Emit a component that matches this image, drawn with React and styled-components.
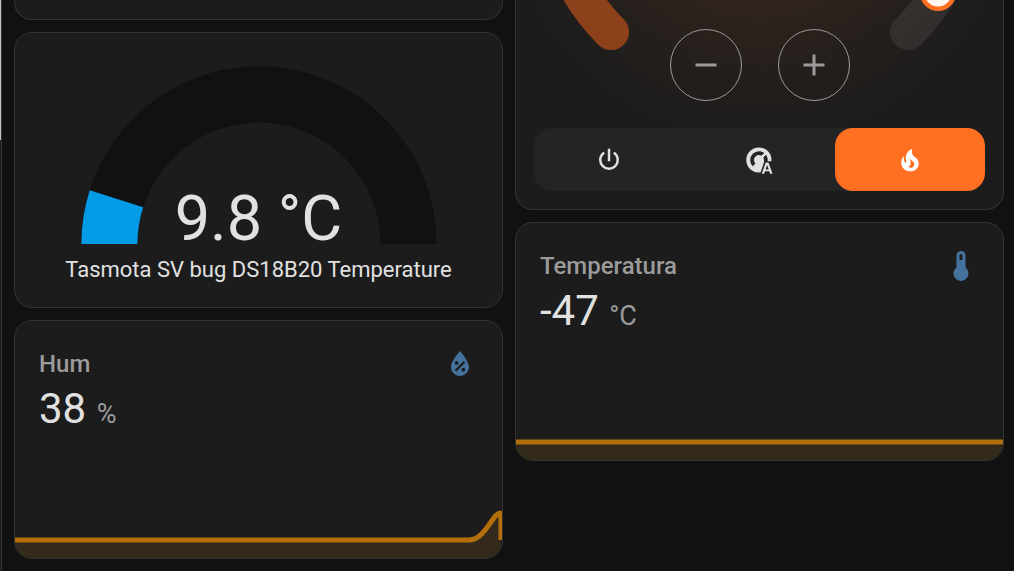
import React from "react";
import styled, { createGlobalStyle } from "styled-components";

const GlobalStyle = createGlobalStyle`
  * {
    box-sizing: border-box;
  }

  body {
    margin: 0;
    background-color: #111111;
    color: #e1e1e1;
    font-family: Roboto, "Liberation Sans", sans-serif;
    overflow: hidden;
  }
`;

const Page = styled.div`
  display: flex;
  min-height: 100vh;
`;

const Sidebar = styled.div`
  width: 2px;
  flex-shrink: 0;
  background-color: #1c1c1c;
  border-right: 1px solid #333333;
`;

const ScrollThumb = styled.div`
  height: 140px;
  background-color: #c1c1c1;
`;

const Board = styled.main`
  flex: 1;
  display: grid;
  grid-template-columns: 1fr 1fr;
  align-items: start;
  gap: 12px;
  padding: 0 10px 12px 12px;
`;

const Column = styled.div`
  display: flex;
  flex-direction: column;
  gap: 12px;
`;

const Card = styled.section`
  background-color: #1c1c1c;
  border: 1px solid #333333;
  border-radius: 18px;
  overflow: hidden;
`;

const CardEnd = styled(Card)`
  height: 20px;
  border-top: none;
  border-radius: 0 0 18px 18px;
`;

const GaugeCard = styled(Card)`
  display: flex;
  flex-direction: column;
  align-items: center;
  padding: 24px;
`;

const GaugeDial = styled.div`
  display: grid;
  justify-items: center;
  align-items: end;
  width: 100%;
  max-width: 374px;

  svg,
  p {
    grid-area: 1 / 1;
  }

  svg {
    display: block;
    width: 100%;
  }

  p {
    margin: 0;
    font-size: 63px;
    line-height: 50px;
  }
`;

const GaugeName = styled.h2`
  margin: 12px 0 0;
  font-size: 22px;
  font-weight: 400;
  line-height: 27px;
  text-align: center;
`;

const SensorCard = styled(Card)`
  display: flex;
  flex-direction: column;
  padding-top: 12px;
`;

const SensorHeader = styled.div`
  display: flex;
  justify-content: space-between;
  align-items: center;
  padding: 0 24px;
  height: 62px;

  h2 {
    margin: 0;
    color: #9b9b9b;
    font-size: 24px;
    font-weight: 500;
    line-height: 60px;
  }

  svg {
    color: #44739e;
  }
`;

const SensorValue = styled.p`
  margin: -6px 0 74px;
  padding: 0 24px;
  font-size: 42px;
  line-height: 40px;

  span {
    color: #9b9b9b;
    font-size: 27px;
  }
`;

const Graph = styled.svg`
  display: block;
  width: 100%;
  height: 50px;
`;

const ThermostatCard = styled(Card)`
  border-top: none;
  border-radius: 0 0 18px 18px;
  padding: 0 18px 18px;
  background-image: radial-gradient(
    circle at 50% -118px,
    rgba(255, 111, 34, 0.18) 0,
    rgba(255, 111, 34, 0.09) 118px,
    rgba(255, 111, 34, 0.04) 190px,
    rgba(255, 111, 34, 0) 260px
  );
`;

const Dial = styled.div`
  display: grid;
  justify-items: center;
  padding-bottom: 27px;

  > * {
    grid-area: 1 / 1;
  }
`;

const Steps = styled.div`
  display: flex;
  gap: 36px;
  padding-top: 29px;
`;

const StepButton = styled.button`
  display: flex;
  align-items: center;
  justify-content: center;
  width: 72px;
  height: 72px;
  padding: 0;
  background: none;
  border: 1px solid #9b9b9b;
  border-radius: 50%;
  color: #9b9b9b;
  cursor: pointer;
`;

const Modes = styled.div`
  display: flex;
  height: 63px;
  background-color: #242424;
  border-radius: 18px;
`;

const ModeButton = styled.button`
  flex: 1;
  display: flex;
  align-items: center;
  justify-content: center;
  padding: 0;
  border: none;
  border-radius: 18px;
  background-color: ${props => (props.$active ? "#ff6f22" : "transparent")};
  color: ${props => (props.$active ? "#ffffff" : "#e1e1e1")};
  cursor: pointer;
`;

const icons = {
  minus: "M19,13H5V11H19V13Z",
  plus: "M19,13H13V19H11V13H5V11H11V5H13V11H19V13Z",
  power:
    "M16.56,5.44L15.11,6.89C16.84,7.94 18,9.83 18,12A6,6 0 0,1 12,18A6,6 0 0,1 6,12C6,9.83 7.16,7.94 8.88,6.88L7.44,5.44C5.36,6.88 4,9.28 4,12A8,8 0 0,0 12,20A8,8 0 0,0 20,12C20,9.28 18.64,6.88 16.56,5.44M13,3H11V13H13",
  thermostatAuto:
    "M12 2A10 10 0 0 1 21.95 13L21.2 13H18.93C19.1 11 18.6 9.2 17.6 7.81L15.43 10C15.79 10.57 16 11.26 16 12V14L13.2 21.9A10 10 0 1 1 12 2ZM12 5A7 7 0 0 0 5 12C5 13.93 5.78 15.68 7.05 16.95L9.17 14.83C8.45 14.1 8 13.1 8 12A4 4 0 0 1 12 8C12.74 8 13.43 8.21 14 8.56L16.19 6.4C15 5.5 13.57 5 12 5ZM17.4 14H19.6L22.8 23H20.9L20.2 21H16.8L16.1 23H14.2L17.4 14ZM17.25 19.6H19.75L18.5 15.9Z",
  fire:
    "M17.66 11.2C17.43 10.9 17.15 10.64 16.89 10.38C16.22 9.78 15.46 9.35 14.82 8.72C13.33 7.26 13 4.85 13.95 3C13 3.23 12.17 3.75 11.46 4.32C8.87 6.4 7.85 10.07 9.07 13.22C9.11 13.32 9.15 13.42 9.15 13.55C9.15 13.77 9 13.97 8.8 14.05C8.57 14.15 8.33 14.09 8.14 13.93C8.08 13.88 8.04 13.83 8 13.76C6.87 12.33 6.69 10.28 7.45 8.64C5.78 10 4.87 12.3 5 14.47C5.06 14.97 5.12 15.47 5.29 15.97C5.43 16.57 5.7 17.17 6 17.7C7.08 19.43 8.95 20.67 10.96 20.92C13.1 21.19 15.39 20.8 17.03 19.32C18.86 17.66 19.5 15 18.56 12.72L18.43 12.46C18.22 12 17.66 11.2 17.66 11.2M14.5 17.5C14.22 17.74 13.76 18 13.4 18.1C12.28 18.5 11.16 17.94 10.5 17.28C11.69 17 12.4 16.12 12.61 15.23C12.78 14.43 12.46 13.77 12.33 13C12.21 12.26 12.23 11.63 12.5 10.94C12.69 11.32 12.89 11.7 13.13 12C13.9 13 15.11 13.44 15.37 14.8C15.41 14.94 15.43 15.08 15.43 15.23C15.46 16.05 15.1 16.95 14.5 17.5Z",
  waterPercent:
    "M12,3.25C12,3.25 6,10 6,14C6,17.32 8.69,20 12,20A6,6 0 0,0 18,14C18,10 12,3.25 12,3.25M14.47,9.97L15.53,11.03L9.53,17.03L8.47,15.97M9.75,10A1.25,1.25 0 0,1 11,11.25A1.25,1.25 0 0,1 9.75,12.5A1.25,1.25 0 0,1 8.5,11.25A1.25,1.25 0 0,1 9.75,10M14.25,14.5A1.25,1.25 0 0,1 15.5,15.75A1.25,1.25 0 0,1 14.25,17A1.25,1.25 0 0,1 13,15.75A1.25,1.25 0 0,1 14.25,14.5Z",
  thermometer:
    "M15 13V5A3 3 0 0 0 9 5V13A5 5 0 1 0 15 13M12 4A1 1 0 0 1 13 5V8H11V5A1 1 0 0 1 12 4Z"
};

const Icon = ({ name, size }) => (
  <svg width={size} height={size} viewBox="0 0 24 24" aria-hidden="true">
    <path d={icons[name]} fill="currentColor" fillRule="evenodd" />
  </svg>
);

const Gauge = ({ value, unit, name }) => {
  const angle = (value / 100) * Math.PI;
  const x = -40 * Math.cos(angle);
  const y = -40 * Math.sin(angle);

  return (
    <GaugeCard>
      <GaugeDial>
        <svg viewBox="-50 -50 100 50" fill="none" strokeWidth="15">
          <path d="M-40 0A40 40 0 0 1 40 0" stroke="#111111" />
          <path d={`M-40 0A40 40 0 0 1 ${x} ${y}`} stroke="#039be5" />
        </svg>
        <p>
          {value} {unit}
        </p>
      </GaugeDial>
      <GaugeName>{name}</GaugeName>
    </GaugeCard>
  );
};

const Sensor = ({ name, value, unit, icon, line }) => (
  <SensorCard>
    <SensorHeader>
      <h2>{name}</h2>
      <Icon name={icon} size={36} />
    </SensorHeader>
    <SensorValue>
      {value} <span>{unit}</span>
    </SensorValue>
    <Graph viewBox="0 0 487 50" preserveAspectRatio="none">
      <path d={`${line}V50H0Z`} fill="#332a1b" />
      <path d={line} fill="none" stroke="#b46f0d" strokeWidth="5" />
    </Graph>
  </SensorCard>
);

const Thermostat = () => (
  <ThermostatCard>
    <Dial>
      <svg width="440" height="60" viewBox="-220 0 440 60" fill="none">
        <path
          d="M-211 -118A212 212 0 0 0 -149 32"
          stroke="#8c411a"
          strokeWidth="36"
          strokeLinecap="round"
        />
        <path
          d="M211 -118A212 212 0 0 1 148 32"
          stroke="#ffffff"
          strokeOpacity="0.08"
          strokeWidth="36"
          strokeLinecap="round"
        />
        <circle cx="178" cy="-7" r="18" fill="#ff6f22" />
        <circle cx="178" cy="-7" r="13.5" fill="#fff6f2" />
      </svg>
      <Steps>
        <StepButton aria-label="Decrease temperature">
          <Icon name="minus" size={36} />
        </StepButton>
        <StepButton aria-label="Increase temperature">
          <Icon name="plus" size={36} />
        </StepButton>
      </Steps>
    </Dial>
    <Modes>
      <ModeButton aria-label="Off">
        <Icon name="power" size={30} />
      </ModeButton>
      <ModeButton aria-label="Auto">
        <Icon name="thermostatAuto" size={30} />
      </ModeButton>
      <ModeButton aria-label="Heat" $active>
        <Icon name="fire" size={30} />
      </ModeButton>
    </Modes>
  </ThermostatCard>
);

const App = () => {
  return (
    <Page>
      <GlobalStyle />
      <Sidebar>
        <ScrollThumb />
      </Sidebar>
      <Board>
        <Column>
          <CardEnd />
          <Gauge
            value={9.8}
            unit="°C"
            name="Tasmota SV bug DS18B20 Temperature"
          />
          <Sensor
            name="Hum"
            value="38"
            unit="%"
            icon="waterPercent"
            line="M0 32H454C470 32 478 5 485 5C486 5 486 8 486 32"
          />
        </Column>
        <Column>
          <Thermostat />
          <Sensor
            name="Temperatura"
            value="-47"
            unit="°C"
            icon="thermometer"
            line="M0 32H487"
          />
        </Column>
      </Board>
    </Page>
  );
};

export default App;
